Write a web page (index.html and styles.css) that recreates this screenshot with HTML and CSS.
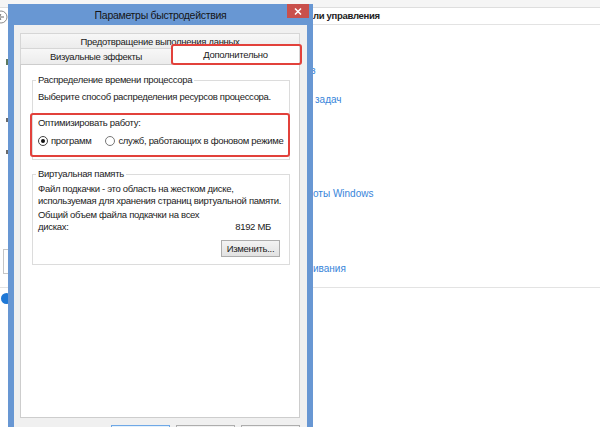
FILE: index.html
```html
<!DOCTYPE html>
<html lang="ru">
<head>
<meta charset="utf-8">
<title>Параметры быстродействия</title>
<link rel="stylesheet" href="styles.css">
</head>
<body>
<div class="desktop">
  <div class="cp">
    <div class="cp-top"></div>
    <div class="cp-upper">
      <aside class="cp-side">
        <svg class="back" width="14" height="14" viewBox="0 0 14 14"><circle cx="7" cy="7" r="6" fill="#fff" stroke="#8a8a8a" stroke-width="1"/><path d="M10 7H4.5M7 4.3L4.3 7L7 9.7" fill="none" stroke="#6a6a6a" stroke-width="1.2"/></svg>
        <span class="mark mark-a"></span>
        <span class="mark mark-b"></span>
        <span class="mark mark-c"></span>
        <span class="side-box"></span>
      </aside>
      <main class="cp-main">
        <div class="cp-header">ли управления</div>
        <a class="cp-link l1" href="#">з</a>
        <a class="cp-link l2" href="#">задач</a>
        <a class="cp-link l3" href="#">оты Windows</a>
        <a class="cp-link l4" href="#">ивания</a>
      </main>
    </div>
    <div class="cp-lower"><span class="cp-dot"></span></div>
  </div>

  <section class="dlg">
    <header class="dlg-title">Параметры быстродействия</header>
    <span class="close"><svg width="8" height="7" viewBox="0 0 8 7"><path d="M1 0.5L7 6.5M7 0.5L1 6.5" stroke="#fff" stroke-width="1.5"/></svg></span>
    <div class="dlg-client">
      <div class="tab-top">Предотвращение выполнения данных</div>
      <div class="tab-row">
        <div class="tab">Визуальные эффекты</div>
        <div class="tab active">Дополнительно</div>
      </div>
      <div class="panel">
        <fieldset class="group cpu">
          <legend>Распределение времени процессора</legend>
          <p class="line">Выберите способ распределения ресурсов процессора.</p>
          <div class="opt">
            <p class="line">Оптимизировать работу:</p>
            <div class="radios">
              <label class="radio"><span class="rb checked"></span>программ</label>
              <label class="radio"><span class="rb"></span>служб, работающих в фоновом режиме</label>
            </div>
          </div>
        </fieldset>
        <fieldset class="group vm">
          <legend>Виртуальная память</legend>
          <p class="line">Файл подкачки - это область на жестком диске,<br>используемая для хранения страниц виртуальной памяти.</p>
          <div class="total">
            <span class="total-label">Общий объем файла подкачки на всех дисках:</span>
            <span class="total-value">8192 МБ</span>
          </div>
          <div class="change-row"><button class="change">Изменить...</button></div>
        </fieldset>
      </div>
      <div class="buttons">
        <button class="btn default" aria-label="ОК"></button>
        <button class="btn" aria-label="Отмена"></button>
        <button class="btn" aria-label="Применить"></button>
      </div>
    </div>
  </section>
</div>
</body>
</html>
```
FILE: styles.css
```css
* { box-sizing: border-box; }
html, body { margin: 0; }
body {
  width: 600px;
  height: 427px;
  overflow: hidden;
  background: #fff;
  font-family: "Liberation Sans", Arial, sans-serif;
  font-size: 9.5px;
  letter-spacing: -0.3px;
  color: #1b1b1b;
}
.desktop { position: relative; width: 600px; height: 427px; overflow: hidden; }

/* background control panel window */
.cp { display: flex; flex-direction: column; height: 100%; }
.cp-top { flex: none; height: 8px; background: #f5f5f5; border-bottom: 1px solid #dedede; }
.cp-upper { flex: none; display: flex; height: 280px; border-bottom: 1px solid #e3e3e3; }
.cp-side { flex: none; width: 8px; }
.back { display: block; margin: 2px 0 0 -6px; }
.mark { display: block; width: 2px; margin-left: 6px; background: #6b6b6b; }
.mark-a { height: 6px; margin-top: 35px; background: #5e7a60; }
.mark-b { height: 4px; margin-top: 53px; }
.mark-c { height: 4px; margin-top: 28px; }
.side-box { display: block; width: 12px; height: 25px; margin: 95px 0 0 3px; border: 1px solid #c6c6c6; }
.cp-main { flex: 1; padding-left: 305px; display: flex; flex-direction: column; align-items: flex-start; }
.cp-header {
  align-self: stretch;
  height: 17px;
  line-height: 16px;
  border-bottom: 1px solid #e3e3e3;
  font-weight: bold;
  font-size: 9.5px;
  color: #222;
}
.cp-link { color: #3785da; font-size: 10px; letter-spacing: 0; line-height: 12px; text-decoration: none; }
.l1 { margin-top: 40px; margin-left: -2px; }
.l2 { margin-top: 17px; margin-left: 2px; }
.l3 { margin-top: 82px; }
.l4 { margin-top: 63px; }
.cp-lower { padding-top: 5px; }
.cp-dot { display: block; width: 11px; height: 11px; margin-left: 1px; border-radius: 50%; background: #1f78d6; }

/* dialog window */
.dlg {
  position: absolute;
  left: 8px;
  top: 4px;
  width: 305px;
  height: 440px;
  background: #6897d3;
  padding: 0 6px;
  display: flex;
  flex-direction: column;
}
.dlg-title {
  flex: none;
  height: 21px;
  display: flex;
  align-items: center;
  justify-content: center;
  font-size: 10.5px;
  color: #151515;
}
.close {
  position: absolute;
  top: 0;
  right: 4px;
  width: 22px;
  height: 14px;
  background: #c9504c;
  display: flex;
  align-items: center;
  justify-content: center;
}
.dlg-client { flex: 1; background: #f0f0f0; padding: 8px 7px 0 6px; }

.tab-top {
  height: 15px;
  border: 1px solid #d6d6d6;
  border-bottom: none;
  background: linear-gradient(#f7f7f7, #ececec);
  text-align: center;
  line-height: 16px;
  overflow: hidden;
  white-space: nowrap;
}
.tab-row { display: flex; height: 16px; }
.tab {
  width: 152px;
  border: 1px solid #d6d6d6;
  border-bottom: none;
  background: linear-gradient(#f7f7f7, #ececec);
  text-align: center;
  line-height: 15px;
  white-space: nowrap;
}
.tab.active {
  position: relative;
  z-index: 1;
  width: 128px;
  height: 20px;
  margin-top: -3px;
  background: #fff;
  border-left: none;
  line-height: 18px;
}
.tab.active::after {
  content: "";
  position: absolute;
  left: -1px;
  top: -2px;
  right: -3px;
  bottom: 0;
  border: 2px solid #e2413b;
  border-radius: 3px;
}

.panel {
  height: 354px;
  background: #fff;
  border: 1px solid #cdcdcd;
  padding: 9px 9px 0 11px;
}
.group {
  margin: 0;
  min-width: 0;
  border: 1px solid #dcdcdc;
  padding: 5px 9px 2px 5px;
}
.group legend { padding: 0 2px; margin-left: -2px; line-height: 12px; white-space: nowrap; }
.group.vm { margin-top: 8px; padding-top: 3px; padding-bottom: 7px; }
.line { margin: 0; line-height: 12px; white-space: nowrap; }

.opt {
  margin: 10px -10px 0 -8px;
  border: 2px solid #e2413b;
  border-radius: 3px;
  padding: 2px 8px 8px 6px;
}
.radios { display: flex; align-items: center; margin-top: 6px; line-height: 12px; white-space: nowrap; }
.radio { display: flex; align-items: center; gap: 3px; }
.radio + .radio { margin-left: 14px; }
.rb {
  flex: none;
  width: 10px;
  height: 10px;
  border-radius: 50%;
  border: 1px solid #777;
  background: #fff;
  display: inline-flex;
  align-items: center;
  justify-content: center;
}
.rb.checked { border-color: #444; }
.rb.checked::after {
  content: "";
  width: 4px;
  height: 4px;
  border-radius: 50%;
  background: #111;
}

.total { display: flex; justify-content: space-between; align-items: flex-end; margin-top: 2px; line-height: 12px; }
.total-label { width: 175px; }
.total-value { margin-right: 9px; white-space: nowrap; }
.change-row { display: flex; justify-content: flex-end; margin-top: 7px; }
.change {
  width: 59px;
  height: 17px;
  padding: 0;
  border: 1px solid #adadad;
  background: linear-gradient(#f3f3f3, #e2e2e2);
  font: inherit;
  letter-spacing: inherit;
  color: inherit;
}

.buttons { display: flex; justify-content: flex-end; gap: 6px; padding-top: 7px; }
.btn {
  width: 59px;
  height: 21px;
  padding: 0;
  border: 1px solid #adadad;
  background: linear-gradient(#f2f2f2, #e5e5e5);
}
.btn.default { border-color: #6fa8e6; background: #e5f1fb; }
```
